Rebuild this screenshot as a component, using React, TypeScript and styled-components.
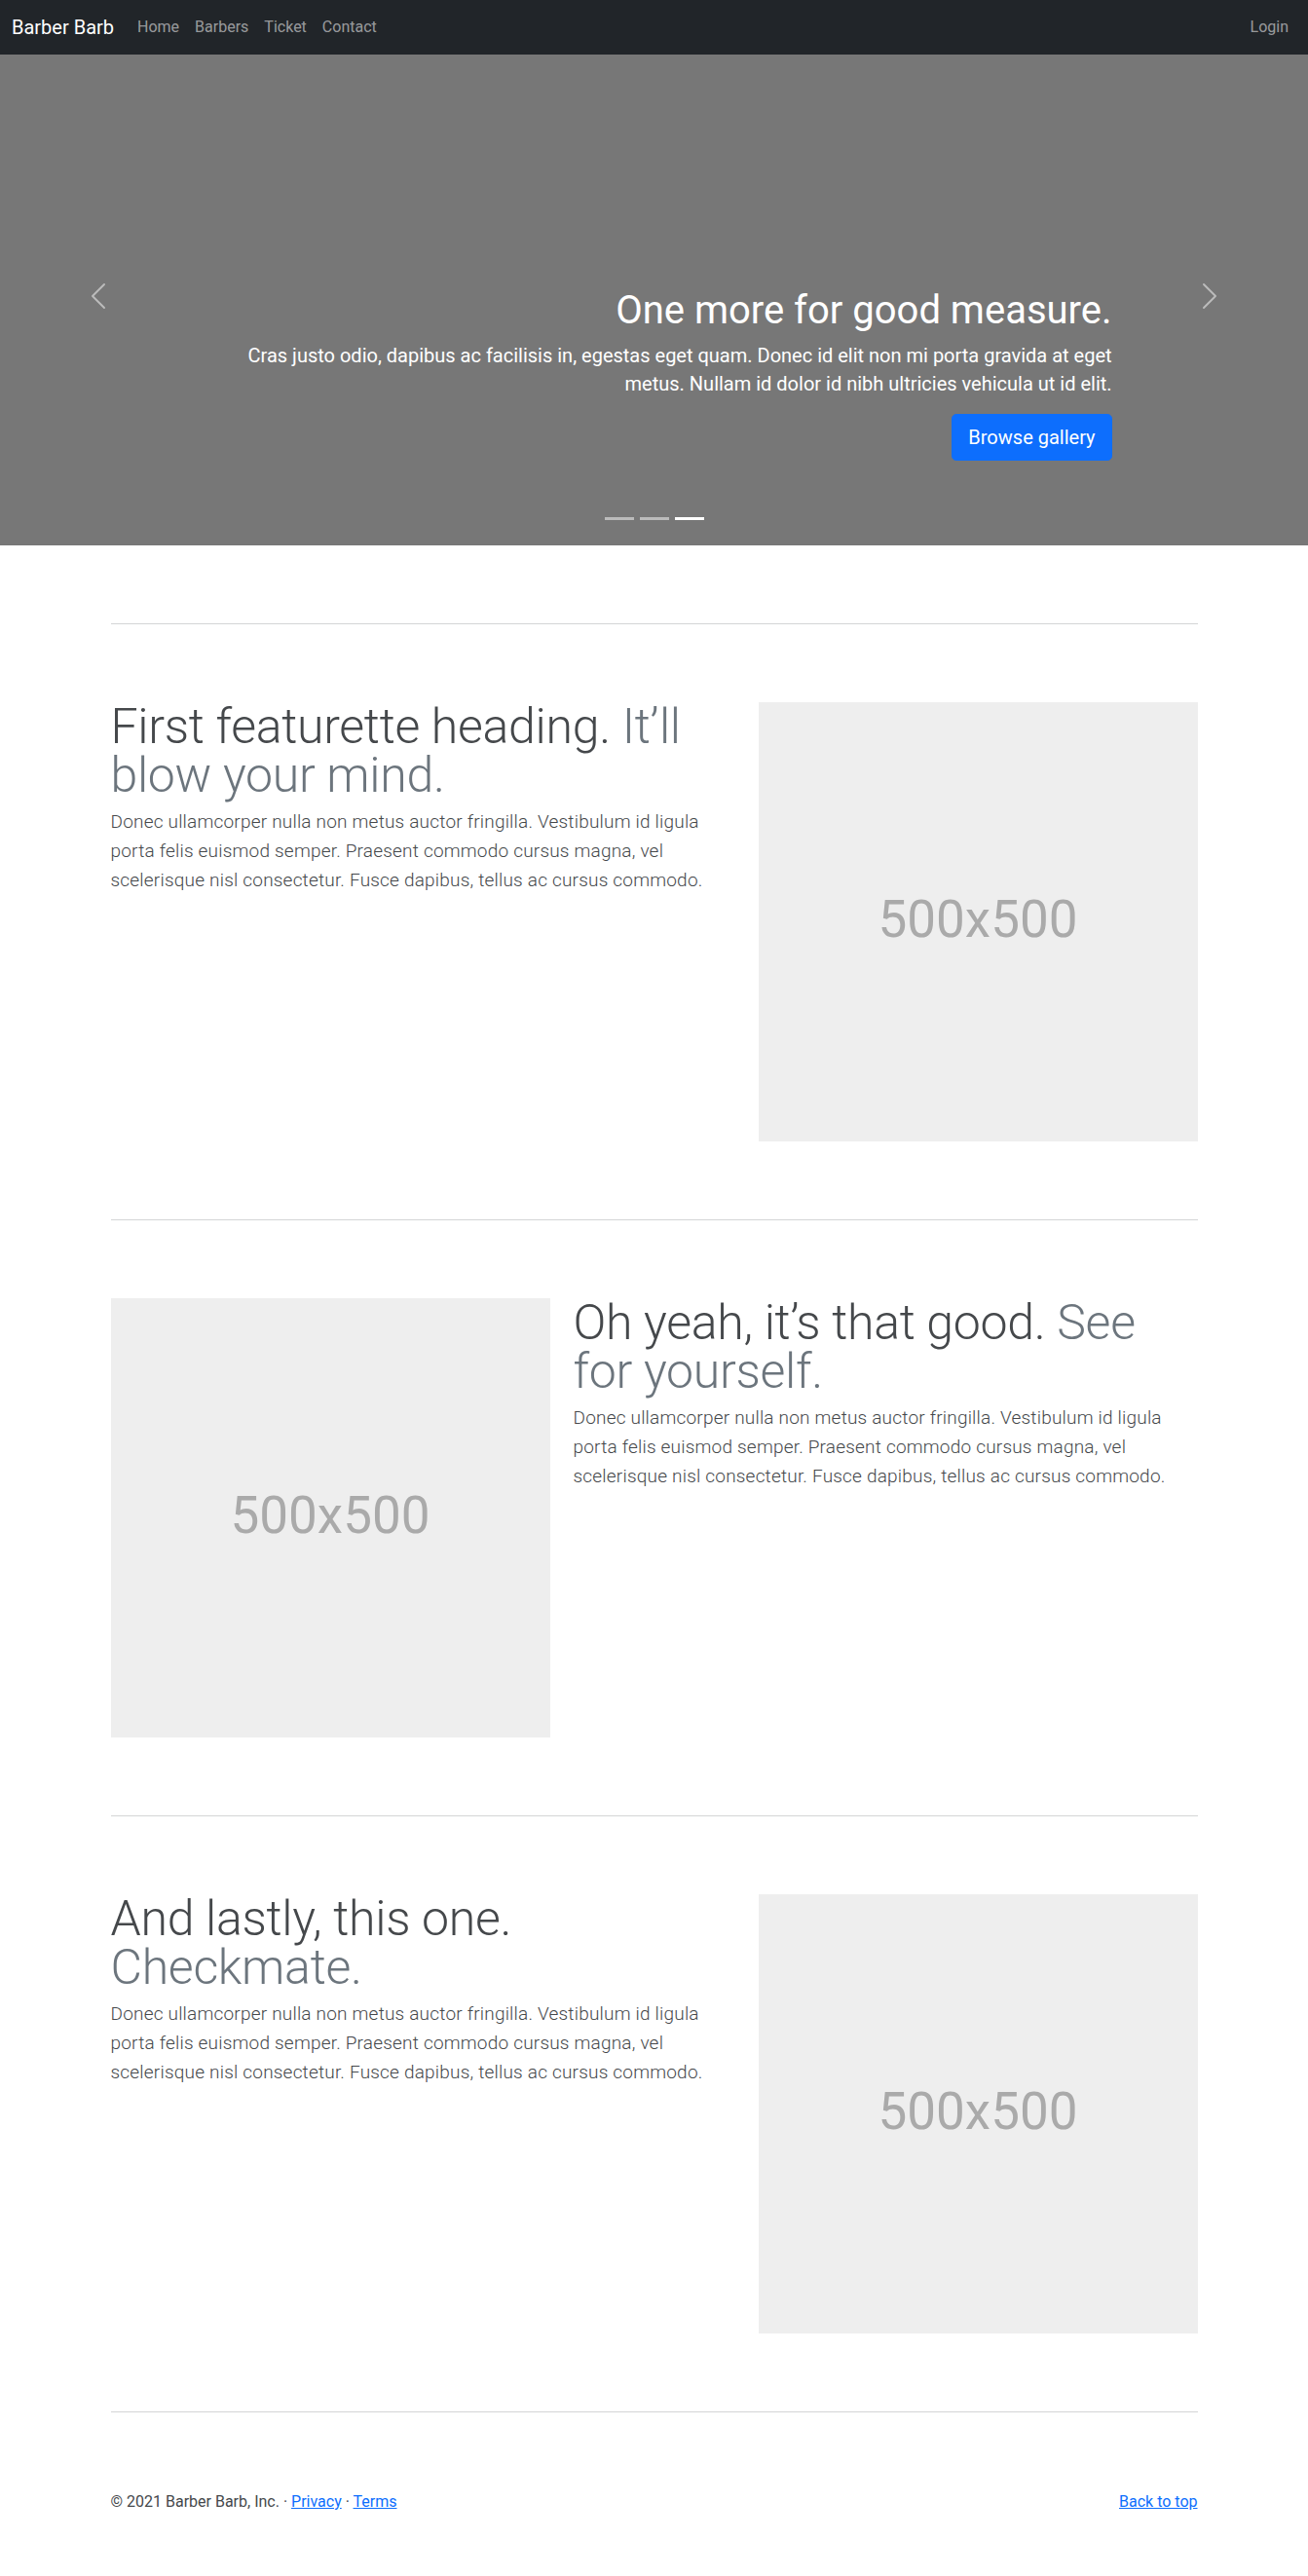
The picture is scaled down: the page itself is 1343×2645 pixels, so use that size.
import React from "react";
import styled, { createGlobalStyle } from "styled-components";

const FONT = `Roboto, "Noto Sans", "Liberation Sans", sans-serif`;

const GlobalStyle = createGlobalStyle`
  *, *::before, *::after { box-sizing: border-box; }
  body {
    margin: 0;
    padding-top: 48px;
    font-family: ${FONT};
    font-size: 16px;
    line-height: 1.5;
    color: #212529;
    background: #fff;
  }
`;

/* ---------- Navbar ---------- */
const NavBar = styled.nav`
  position: fixed;
  top: 0;
  left: 0;
  right: 0;
  z-index: 1030;
  height: 56px;
  padding: 8px 12px;
  background: #212529;
  display: flex;
  align-items: center;
`;

const Brand = styled.a`
  padding: 5px 0;
  margin-right: 16px;
  font-size: 20px;
  line-height: 30px;
  color: #fff;
  text-decoration: none;
  white-space: nowrap;
`;

const NavList = styled.ul<{ $end?: boolean }>`
  display: flex;
  list-style: none;
  margin: 0;
  margin-left: ${(p) => (p.$end ? "auto" : "0")};
  padding: 0;
`;

const NavLink = styled.a`
  display: block;
  padding: 8px;
  font-size: 16px;
  line-height: 24px;
  color: rgba(255, 255, 255, 0.55);
  text-decoration: none;
`;

/* ---------- Carousel ---------- */
const Carousel = styled.section`
  display: grid;
  grid-template-columns: 15% 1fr 15%;
  height: 512px;
  margin-bottom: 64px;
  background: #777;
  color: #fff;
`;

const Control = styled.button`
  display: flex;
  align-items: center;
  justify-content: center;
  padding: 0;
  border: 0;
  background: none;
  opacity: 0.5;
  cursor: pointer;
`;

const SlideBody = styled.div`
  display: flex;
  flex-direction: column;
  justify-content: flex-end;
  padding-bottom: 16px;
`;

const Caption = styled.div`
  padding: 20px 0;
  margin-bottom: 12px;
  text-align: right;
`;

const CaptionTitle = styled.h1`
  margin: 0 0 8px;
  font-size: 40px;
  font-weight: 400;
  line-height: 1.2;
`;

const CaptionText = styled.p`
  margin: 0 0 16px;
  font-size: 20px;
  line-height: 29px;
`;

const ButtonRow = styled.p`
  display: flex;
  justify-content: flex-end;
  margin: 0 0 16px;
`;

const PrimaryButton = styled.a`
  display: inline-block;
  padding: 8px 16px;
  border: 1px solid #0d6efd;
  border-radius: 4.8px;
  background: #0d6efd;
  color: #fff;
  font-size: 20px;
  line-height: 30px;
  text-decoration: none;
`;

const Indicators = styled.div`
  display: flex;
  justify-content: center;
`;

const Indicator = styled.button<{ $active?: boolean }>`
  width: 30px;
  height: 3px;
  margin: 10px 3px;
  padding: 0;
  border: 0;
  background: #fff;
  opacity: ${(p) => (p.$active ? 1 : 0.5)};
`;

/* ---------- Marketing ---------- */
const Container = styled.main`
  max-width: 1140px;
  margin: 0 auto;
  padding: 0 12px;
`;

const Divider = styled.hr`
  height: 0;
  margin: 80px 0;
  border: 0;
  border-top: 1px solid #d4d5d6;
`;

const Row = styled.div`
  display: flex;
  margin: 0 -12px;
`;

const Col = styled.div<{ $span: number }>`
  flex: 0 0 ${(p) => (p.$span / 12) * 100}%;
  max-width: ${(p) => (p.$span / 12) * 100}%;
  padding: 0 12px;
`;

const FeatureHeading = styled.h2`
  margin: 0 0 8px;
  font-size: 50px;
  font-weight: 300;
  line-height: 1;
  letter-spacing: -0.3px;
  color: #45484b;
`;

const Muted = styled.span`
  color: #6c757d;
`;

const Lead = styled.p`
  margin: 0 0 16px;
  font-size: 19px;
  font-weight: 300;
  line-height: 30px;
  letter-spacing: 0.2px;
  color: #45484b;
`;

const Placeholder = styled.div`
  aspect-ratio: 1 / 1;
  display: flex;
  align-items: center;
  justify-content: center;
  padding-bottom: 4px;
  background: #eee;
  color: #aaa;
  font-size: 53px;
`;

/* ---------- Footer ---------- */
const Footer = styled.footer`
  max-width: 1140px;
  margin: 0 auto;
  padding: 0 12px;
  display: flex;
  justify-content: space-between;
  color: #45484b;
`;

const FooterText = styled.p`
  margin: 0 0 16px;
`;

const Link = styled.a`
  color: #0d6efd;
  text-decoration: underline;
`;

const Chevron = ({ dir }: { dir: "prev" | "next" }) => (
  <svg width="32" height="32" viewBox="0 0 16 16" fill="#fff" aria-hidden="true">
    {dir === "prev" ? (
      <path d="M11.354 1.646a.5.5 0 0 1 0 .708L5.707 8l5.647 5.646a.5.5 0 0 1-.708.708l-6-6a.5.5 0 0 1 0-.708l6-6a.5.5 0 0 1 .708 0z" />
    ) : (
      <path d="M4.646 1.646a.5.5 0 0 1 .708 0l6 6a.5.5 0 0 1 0 .708l-6 6a.5.5 0 0 1-.708-.708L10.293 8 4.646 2.354a.5.5 0 0 1 0-.708z" />
    )}
  </svg>
);

const LEAD =
  "Donec ullamcorper nulla non metus auctor fringilla. Vestibulum id ligula porta felis euismod semper. Praesent commodo cursus magna, vel scelerisque nisl consectetur. Fusce dapibus, tellus ac cursus commodo.";

const Feature = ({ title, muted, imageFirst }: { title: string; muted: string; imageFirst?: boolean }) => {
  const text = (
    <Col $span={7}>
      <FeatureHeading>
        {title} <Muted>{muted}</Muted>
      </FeatureHeading>
      <Lead>{LEAD}</Lead>
    </Col>
  );
  const image = (
    <Col $span={5}>
      <Placeholder>500x500</Placeholder>
    </Col>
  );
  return (
    <Row>
      {imageFirst ? image : text}
      {imageFirst ? text : image}
    </Row>
  );
};

export default function App() {
  return (
    <>
      <GlobalStyle />
      <NavBar>
        <Brand href="#">Barber Barb</Brand>
        <NavList>
          <li><NavLink href="#">Home</NavLink></li>
          <li><NavLink href="#">Barbers</NavLink></li>
          <li><NavLink href="#">Ticket</NavLink></li>
          <li><NavLink href="#">Contact</NavLink></li>
        </NavList>
        <NavList $end>
          <li><NavLink href="#">Login</NavLink></li>
        </NavList>
      </NavBar>

      <Carousel>
        <Control aria-label="Previous">
          <Chevron dir="prev" />
        </Control>
        <SlideBody>
          <Caption>
            <CaptionTitle>One more for good measure.</CaptionTitle>
            <CaptionText>
              Cras justo odio, dapibus ac facilisis in, egestas eget quam. Donec id elit non mi porta gravida at eget
              metus. Nullam id dolor id nibh ultricies vehicula ut id elit.
            </CaptionText>
            <ButtonRow>
              <PrimaryButton href="#">Browse gallery</PrimaryButton>
            </ButtonRow>
          </Caption>
          <Indicators>
            <Indicator aria-label="Slide 1" />
            <Indicator aria-label="Slide 2" />
            <Indicator $active aria-label="Slide 3" />
          </Indicators>
        </SlideBody>
        <Control aria-label="Next">
          <Chevron dir="next" />
        </Control>
      </Carousel>

      <Container>
        <Divider />
        <Feature title="First featurette heading." muted="It’ll blow your mind." />
        <Divider />
        <Feature title="Oh yeah, it’s that good." muted="See for yourself." imageFirst />
        <Divider />
        <Feature title="And lastly, this one." muted="Checkmate." />
        <Divider />
      </Container>

      <Footer>
        <FooterText>
          © 2021 Barber Barb, Inc. · <Link href="#">Privacy</Link> · <Link href="#">Terms</Link>
        </FooterText>
        <FooterText>
          <Link href="#">Back to top</Link>
        </FooterText>
      </Footer>
    </>
  );
}
